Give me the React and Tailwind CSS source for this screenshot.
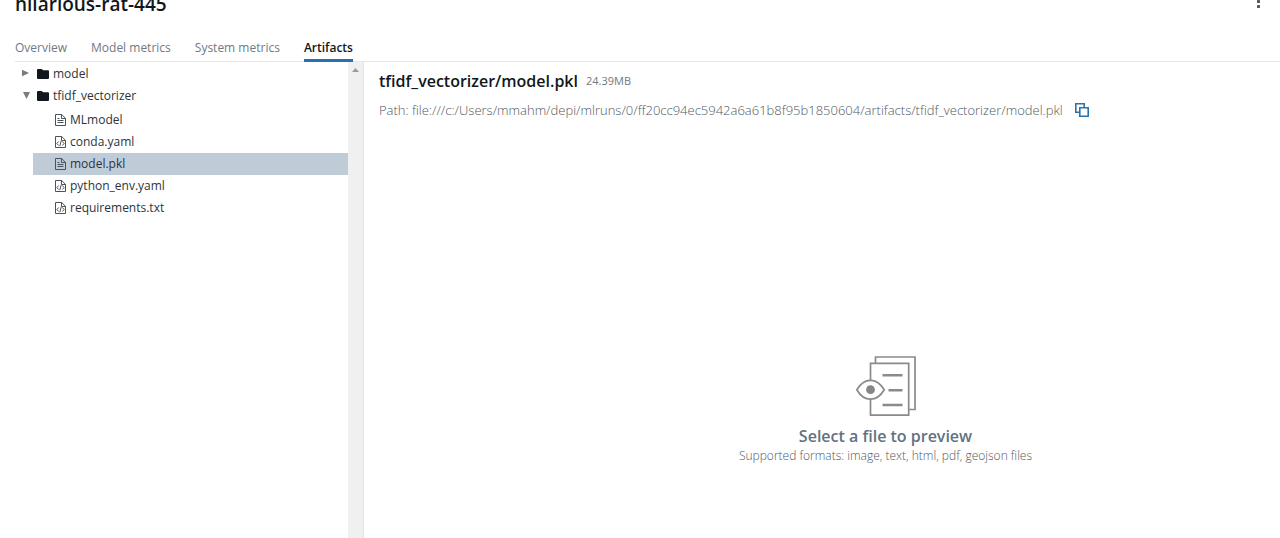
import React from "react";

const tabs = ["Overview", "Model metrics", "System metrics", "Artifacts"];

const files = [
  { name: "MLmodel", kind: "text" },
  { name: "conda.yaml", kind: "code" },
  { name: "model.pkl", kind: "text", selected: true },
  { name: "python_env.yaml", kind: "code" },
  { name: "requirements.txt", kind: "code" },
];

function FolderIcon() {
  return (
    <svg viewBox="0 0 12 10" className="h-[10px] w-3 shrink-0" fill="#11171c" aria-hidden="true">
      <path d="M1 0h3.6l1.6 1.3H11a1 1 0 0 1 1 1V9a1 1 0 0 1-1 1H1a1 1 0 0 1-1-1V1a1 1 0 0 1 1-1z" />
    </svg>
  );
}

function FileIcon({ kind }) {
  return (
    <svg
      viewBox="0 0 11 12"
      className="h-3 w-[11px] shrink-0"
      fill="none"
      stroke="#4a535c"
      strokeWidth="1"
      aria-hidden="true"
    >
      <path d="M.5.5h6.2l3.8 3.8v7.2H.5z" />
      <path d="M6.500.5v4h4" />
      {kind === "text" ? (
        <path d="M2.500 4.500h2M2.500 6.500h6M2.500 8.500h6" />
      ) : (
        <path d="M3.600 5.500 1.900 7.500l1.700 2M7.400 5.500l1.700 2-1.700 2M6.200 4.800l-1.400 5.400" />
      )}
    </svg>
  );
}

function Folder({ name, open, children }) {
  return (
    <li>
      <button type="button" aria-expanded={open} className="flex h-[22px] w-full items-center pl-[7px] text-left">
        <svg viewBox="0 0 8 8" className="mb-[2px] h-2 w-2 shrink-0" fill="#7b7b7b" aria-hidden="true">
          {open ? <path d="M1 1h7L4.500 8z" /> : <path d="M0 .8 7 4 0 7.200z" />}
        </svg>
        <span className="ml-[7px] flex items-center gap-1">
          <FolderIcon />
          {name}
        </span>
      </button>
      {children}
    </li>
  );
}

function PreviewIcon() {
  return (
    <svg viewBox="0 0 60 60" className="h-[60px] w-[60px]" fill="none" stroke="#8a8a8a" aria-hidden="true">
      <path d="M19.500 7V1h39.500v52.500h-6" strokeWidth="1.700" />
      <path d="M14.500 7.300h38.200v51.900H14.500z" fill="#fff" strokeWidth="1.700" />
      <path d="M26.500 19.300h20M32.500 34.300h14M26.500 49h20" strokeWidth="2.500" />
      <path
        d="M.8 33.700C4.500 27.500 9 24.300 14.500 24.300s10 3.200 13.700 9.400C24.500 40 20 43.200 14.500 43.200S4.500 40 .8 33.700z"
        fill="#fff"
        strokeWidth="1.700"
      />
      <circle cx="14.500" cy="33.700" r="4.400" fill="#868686" stroke="none" />
    </svg>
  );
}

export default function App() {
  return (
    <div className="flex min-h-screen flex-col bg-white font-['Open_Sans','Noto_Sans',sans-serif] text-xs text-[#11171c]">
      <header className="flex h-9 items-start justify-between overflow-hidden pr-4 pl-[15px]">
        <h1 className="-mt-2 text-[19px] leading-6 font-semibold">hilarious-rat-445</h1>
        <button type="button" aria-label="More actions" className="-mt-2">
          <svg viewBox="0 0 12 18" className="h-[18px] w-3" fill="#4f5b66" aria-hidden="true">
            <rect x="5" y="3" width="3" height="3" rx=".6" />
            <rect x="5" y="8" width="3" height="3" rx=".6" />
            <rect x="5" y="13" width="3" height="3" rx=".6" />
          </svg>
        </button>
      </header>

      <nav className="ml-[15px] flex h-[26px] gap-6 border-b border-[#e3e7eb] font-medium text-[#6f7a84]">
        {tabs.map((tab) => (
          <a
            key={tab}
            href={"#" + tab.toLowerCase().replace(" ", "-")}
            aria-current={tab === "Artifacts" ? "page" : undefined}
            className={
              tab === "Artifacts"
                ? "h-[26px] border-b-3 border-[#2b6fae] leading-6 font-semibold text-[#11171c]"
                : "leading-6"
            }
          >
            {tab}
          </a>
        ))}
      </nav>

      <main className="flex grow">
        <aside className="flex w-[364px] shrink-0 border-r border-[#dfe4ea]">
          <ul className="grow pt-px pl-[15px] text-[#2b343c]">
            <Folder name="model" open={false} />
            <Folder name="tfidf_vectorizer" open>
              <ul className="mt-[2px] ml-[18px]">
                {files.map((file) => (
                  <li key={file.name}>
                    <button
                      type="button"
                      className={
                        file.selected
                          ? "flex h-[22px] w-full items-center gap-1 bg-[#c0cbd8] pl-[22px] text-left"
                          : "flex h-[22px] w-full items-center gap-1 pl-[22px] text-left"
                      }
                    >
                      <FileIcon kind={file.kind} />
                      {file.name}
                    </button>
                  </li>
                ))}
              </ul>
            </Folder>
          </ul>
          <div className="flex w-[15px] shrink-0 justify-center bg-[#f0f0f0] pt-[6px]">
            <svg viewBox="0 0 7 4" className="h-1 w-[7px]" fill="#9b9b9b" aria-hidden="true">
              <path d="M3.500 0 7 4H0z" />
            </svg>
          </div>
        </aside>

        <section className="flex min-w-0 grow flex-col pt-[7px] pl-[15px]">
          <div className="flex items-center gap-2">
            <h2 className="text-base leading-6 font-semibold">tfidf_vectorizer/model.pkl</h2>
            <span className="text-[11px] text-[#6f7a84]">24.39MB</span>
          </div>
          <div className="mt-[7px] flex items-center gap-3 text-[13px] leading-5 font-light text-[#4f5962]">
            <span>
              Path: file:///c:/Users/mmahm/depi/mlruns/0/ff20cc94ec5942a6a61b8f95b1850604/artifacts/tfidf_vectorizer/model.pkl
            </span>
            <button type="button" aria-label="Copy path">
              <svg viewBox="0 0 14 14" className="h-[14px] w-[14px]" fill="none" stroke="#2c72ad" strokeWidth="1.600" aria-hidden="true">
                <path d="M4.500 9.200H.8V.8h8.400v3.700" />
                <path d="M4.800 4.800h8.400v8.400H4.800z" />
              </svg>
            </button>
          </div>
          <div className="mt-[236px] flex flex-col items-center pl-28 text-[#5f7281]">
            <PreviewIcon />
            <p className="mt-2 text-base leading-6 font-semibold">Select a file to preview</p>
            <p className="text-xs leading-4 font-light text-[#4f5962]">Supported formats: image, text, html, pdf, geojson files</p>
          </div>
        </section>
      </main>
    </div>
  );
}
